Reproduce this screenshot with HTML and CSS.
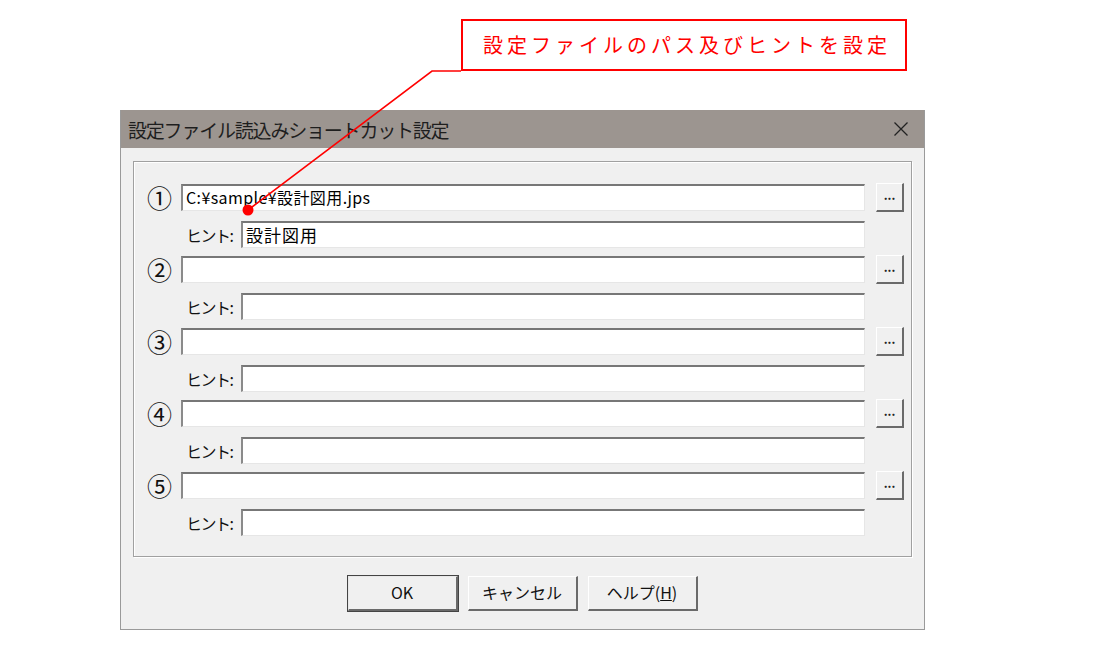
FILE: index.html
```html
<!DOCTYPE html>
<html lang="ja">
<head>
    <meta charset="UTF-8">
    <title>設定ファイル読込みショートカット設定</title>
    <link rel="stylesheet" href="styles.css">
</head>
<body>
    <!-- 説明の吹き出し -->
    <div class="callout">設定ファイルのパス及びヒントを設定</div>

    <!-- ダイアログ -->
    <div class="dialog">
        <div class="titlebar">
            <span class="title">設定ファイル読込みショートカット設定</span>
            <svg class="close" width="16" height="16" viewBox="0 0 16 16">
                <path d="M1.5 1.5 L14.5 14.5 M14.5 1.5 L1.5 14.5" stroke="#222" stroke-width="1.3" fill="none"/>
            </svg>
        </div>

        <div class="dialog-body">
            <div class="group">
                <div class="entry">
                    <span class="num">①</span>
                    <div class="field path">C:¥sample¥設計図用.jps</div>
                    <div class="browse">...</div>
                    <span class="hint-label">ヒント:</span>
                    <div class="field hint">設計図用</div>
                </div>
                <div class="entry">
                    <span class="num">②</span>
                    <div class="field path"></div>
                    <div class="browse">...</div>
                    <span class="hint-label">ヒント:</span>
                    <div class="field hint"></div>
                </div>
                <div class="entry">
                    <span class="num">③</span>
                    <div class="field path"></div>
                    <div class="browse">...</div>
                    <span class="hint-label">ヒント:</span>
                    <div class="field hint"></div>
                </div>
                <div class="entry">
                    <span class="num">④</span>
                    <div class="field path"></div>
                    <div class="browse">...</div>
                    <span class="hint-label">ヒント:</span>
                    <div class="field hint"></div>
                </div>
                <div class="entry">
                    <span class="num">⑤</span>
                    <div class="field path"></div>
                    <div class="browse">...</div>
                    <span class="hint-label">ヒント:</span>
                    <div class="field hint"></div>
                </div>
            </div>

            <div class="buttons">
                <div class="btn default">OK</div>
                <div class="btn">キャンセル</div>
                <div class="btn">ヘルプ(<u>H</u>)</div>
            </div>
        </div>
    </div>

    <!-- 吹き出しの引き出し線 -->
    <svg class="leader" width="1098" height="657" viewBox="0 0 1098 657">
        <polyline points="461,71 432,71 248,210" stroke="#ff0000" stroke-width="1.6" fill="none"/>
        <circle cx="248" cy="210" r="5.5" fill="#ff0000"/>
    </svg>
</body>
</html>
```

FILE: styles.css
```css
body {
    margin: 0;
    background-color: #ffffff;
    font-family: "Noto Sans CJK JP", "Noto Sans", sans-serif;
    position: relative;
    width: 1098px;
    height: 657px;
    overflow: hidden;
}

/* 吹き出し */
.callout {
    margin: 19px 0 0 461px;
    width: 422px;
    height: 48px;
    padding-left: 20px;
    border: 2px solid #ff0000;
    color: #ff0000;
    font-size: 20px;
    letter-spacing: 4px;
    line-height: 48px;
}

/* 引き出し線 */
.leader {
    position: absolute;
    top: 0;
    left: 0;
    pointer-events: none;
}

/* ダイアログ */
.dialog {
    margin: 39px 0 0 120px;
    width: 803px;
    border: 1px solid #9a9a9a;
    border-top: none;
    background-color: #f0f0f0;
}

.titlebar {
    height: 38px;
    background-color: #9c9590;
    display: flex;
    align-items: center;
    justify-content: space-between;
    padding: 0 15px 0 7px;
}

.title {
    font-size: 19px;
    color: #1e1e1e;
    letter-spacing: -1.2px;
}

.dialog-body {
    padding: 13px 12px 18px 12px;
}

/* グループ枠 */
.group {
    border: 1px solid #a0a0a0;
    box-shadow: inset 1px 1px 0 #ffffff, 1px 1px 0 #ffffff;
    padding: 22px 7px 20px 15px;
    display: flex;
    flex-direction: column;
    gap: 8px;
}

.entry {
    display: grid;
    grid-template-columns: 32px 60px 1fr 39px;
    grid-template-rows: 27px 27px;
    row-gap: 10px;
    align-items: center;
}

.num {
    font-size: 25px;
    line-height: 27px;
    color: #111;
    margin-left: -2px;
}

.field {
    height: 27px;
    box-sizing: border-box;
    background-color: #ffffff;
    border-top: 2px solid #777777;
    border-left: 2px solid #8a8a8a;
    border-bottom: 1px solid #e6e6e6;
    border-right: 1px solid #e6e6e6;
    font-size: 16px;
    letter-spacing: 0.4px;
    line-height: 23px;
    padding-left: 3px;
    color: #000;
    white-space: nowrap;
}

.path {
    grid-column: 2 / 4;
}

.hint {
    grid-column: 3 / 4;
    font-size: 17px;
    letter-spacing: 1px;
}

.browse {
    justify-self: end;
    width: 28px;
    height: 29px;
    box-sizing: border-box;
    border-top: 1px solid #ffffff;
    border-left: 1px solid #ffffff;
    border-bottom: 2px solid #6a6a6a;
    border-right: 2px solid #6a6a6a;
    background-color: #f0f0f0;
    font-size: 12px;
    font-weight: bold;
    line-height: 22px;
    text-align: center;
    color: #222;
}

.hint-label {
    grid-column: 2 / 3;
    font-size: 16px;
    color: #111;
    padding-left: 5px;
    letter-spacing: -1.5px;
}

/* ボタン */
.buttons {
    margin-top: 19px;
    display: flex;
    justify-content: center;
    gap: 10px;
}

.btn {
    width: 110px;
    height: 35px;
    box-sizing: border-box;
    border-top: 1px solid #ffffff;
    border-left: 1px solid #ffffff;
    border-bottom: 2px solid #6a6a6a;
    border-right: 2px solid #6a6a6a;
    background-color: #f0f0f0;
    font-size: 16px;
    line-height: 31px;
    text-align: center;
    color: #111;
}

.btn.default {
    outline: 1px solid #444;
    border-top-color: #e8e8e8;
    border-left-color: #e8e8e8;
}
```
